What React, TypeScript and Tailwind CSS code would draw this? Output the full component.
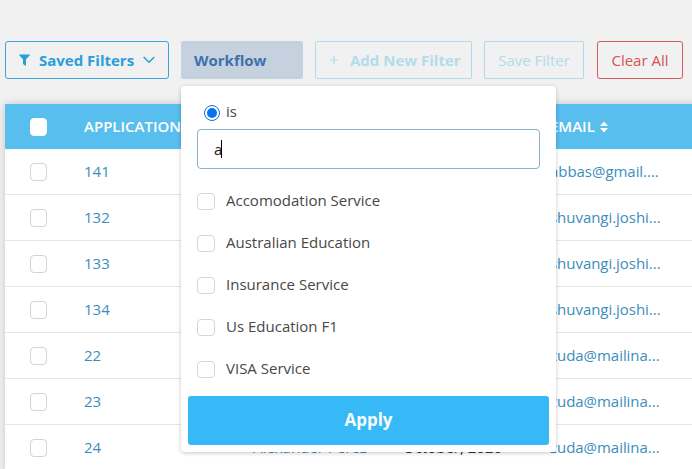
import { useState } from "react";

const services = [
  "Accomodation Service",
  "Australian Education",
  "Insurance Service",
  "Us Education F1",
  "VISA Service",
];

const rows = [
  { id: "141", name: "", date: "", email: "abbas@gmail...." },
  { id: "132", name: "", date: "", email: "shuvangi.joshi..." },
  { id: "133", name: "", date: "", email: "shuvangi.joshi..." },
  { id: "134", name: "", date: "", email: "shuvangi.joshi..." },
  { id: "22", name: "", date: "", email: "zuda@mailina..." },
  { id: "23", name: "", date: "", email: "zuda@mailina..." },
  { id: "24", name: "Alexander Perez", date: "October, 2020", email: "zuda@mailina..." },
];

function Checkbox({ className = "" }: { className?: string }) {
  return (
    <input
      type="checkbox"
      className={`appearance-none shrink-0 rounded-[4px] border bg-white ${className}`}
    />
  );
}

function WorkflowMenu() {
  const [query, setQuery] = useState("a");

  return (
    <div className="absolute left-0 top-[45px] z-10 flex h-[366px] w-[375px] flex-col rounded-[4px] bg-white px-[7px] pb-[7px] shadow-[0_1px_4px_rgba(0,0,0,0.22)]">
      <label className="ml-4 mt-[15px] flex h-5 items-center gap-[6px] text-[15px] text-[#484848]">
        <span className="relative top-[2px] flex h-4 w-4 items-center justify-center rounded-full border border-[#0b6fd8] bg-white">
          <span className="h-[10px] w-[10px] rounded-full bg-[#0873ee]" />
        </span>
        is
      </label>
      <div className="relative ml-[9px] mt-2 h-10 w-[343px]">
        <input
          type="text"
          value={query}
          onChange={(e) => setQuery(e.target.value)}
          className="h-full w-full rounded-[4px] border border-[#87b4c6] bg-white px-4 text-[15px] text-[#222] outline-none"
        />
        <span className="absolute left-6 top-[11px] h-[18px] w-px bg-black" />
      </div>
      <div className="ml-[9px] mt-[10px] flex flex-col">
        {services.map((service) => (
          <label key={service} className="flex h-[42px] items-center gap-[11px] text-[15px] text-[#484848]">
            <Checkbox className="relative top-px h-[17px] w-[18px] border-[#d6d6d6]" />
            {service}
          </label>
        ))}
      </div>
      <button className="mt-auto h-[49px] w-full rounded-[3px] bg-[#36b9f6] pb-px text-[17px] font-bold text-[#f4fcff]">
        Apply
      </button>
    </div>
  );
}

function FilterBar() {
  return (
    <div className="flex h-[38px] gap-3 text-[15px]">
      <button className="flex w-[164px] shrink-0 items-center rounded-[3px] border border-[#3ea6d6] pl-[13px] font-bold text-[#289fd8]">
        <svg width="11" height="12" viewBox="0 0 11 12" fill="currentColor">
          <path d="M.5 0.5h10c.5 0 .6.5.3.8L7 5.2v6c0 .5-.5.7-.8.4L4 10V5.2L.2 1.3C-.1 1 0 .5.5.5z" />
        </svg>
        <span className="ml-[9px]">Saved Filters</span>
        <svg className="ml-[9px]" width="12" height="8" viewBox="0 0 12 8" fill="none" stroke="currentColor" strokeWidth="1.5">
          <path d="M.7 1 6 6.3 11.3 1" />
        </svg>
      </button>
      <div className="relative w-[122px] shrink-0">
        <button className="h-full w-full rounded-[2px] bg-[#c5d1df] pl-[13px] text-left font-bold text-[#3e71aa]">
          Workflow
        </button>
        <WorkflowMenu />
      </div>
      <button className="flex w-[157px] shrink-0 items-center rounded-[2px] border border-[#addbea] pl-[14px] font-bold text-[#b1dcec]">
        <svg width="8" height="8" viewBox="0 0 8 8" stroke="currentColor" strokeWidth="1.2">
          <path d="M4 0v8M0 4h8" />
        </svg>
        <span className="ml-3">Add New Filter</span>
      </button>
      <button className="w-[100px] shrink-0 rounded-[2px] border border-[#addbea] text-[#b1dcec]">Save Filter</button>
      <button className="ml-px w-[86px] shrink-0 rounded-[3px] border border-[#d65a5a] text-[#d25555]">Clear All</button>
    </div>
  );
}

export default function App() {
  return (
    <div className="h-[469px] w-[692px] overflow-hidden bg-[#f1f1f1] pl-[5px] pt-[41px] font-['Open_Sans',sans-serif]">
      <FilterBar />
      <div className="mt-[25px] w-[720px] bg-white shadow-[0_0_8px_rgba(0,0,0,0.18)]">
        <div className="flex h-[45px] items-center bg-[#58beed] text-[15px] font-semibold text-white">
          <div className="flex w-[79px] pl-[25px]">
            <Checkbox className="h-[18px] w-[17px] border-white" />
          </div>
          <div className="w-[466px]">APPLICATION</div>
          <div className="flex items-center gap-[5px]">
            EMAIL
            <svg width="8" height="12" viewBox="0 0 8 12" fill="currentColor">
              <path d="M4 .5 8 5H0zM4 11.5 0 7h8z" />
            </svg>
          </div>
        </div>
        {rows.map((row) => (
          <div key={row.id} className="flex h-[46px] items-center border-b border-[#e6e6e6] text-[15px] text-[#3c8dbc]">
            <div className="flex w-[79px] pl-[25px]">
              <Checkbox className="h-[18px] w-[17px] border-[#d3d3d3]" />
            </div>
            <div className="w-[169px]">{row.id}</div>
            <div className="w-[150px]">{row.name}</div>
            <div className="w-[147px] text-[#333]">{row.date}</div>
            <div className="tracking-[-0.04px]">{row.email}</div>
          </div>
        ))}
      </div>
    </div>
  );
}
